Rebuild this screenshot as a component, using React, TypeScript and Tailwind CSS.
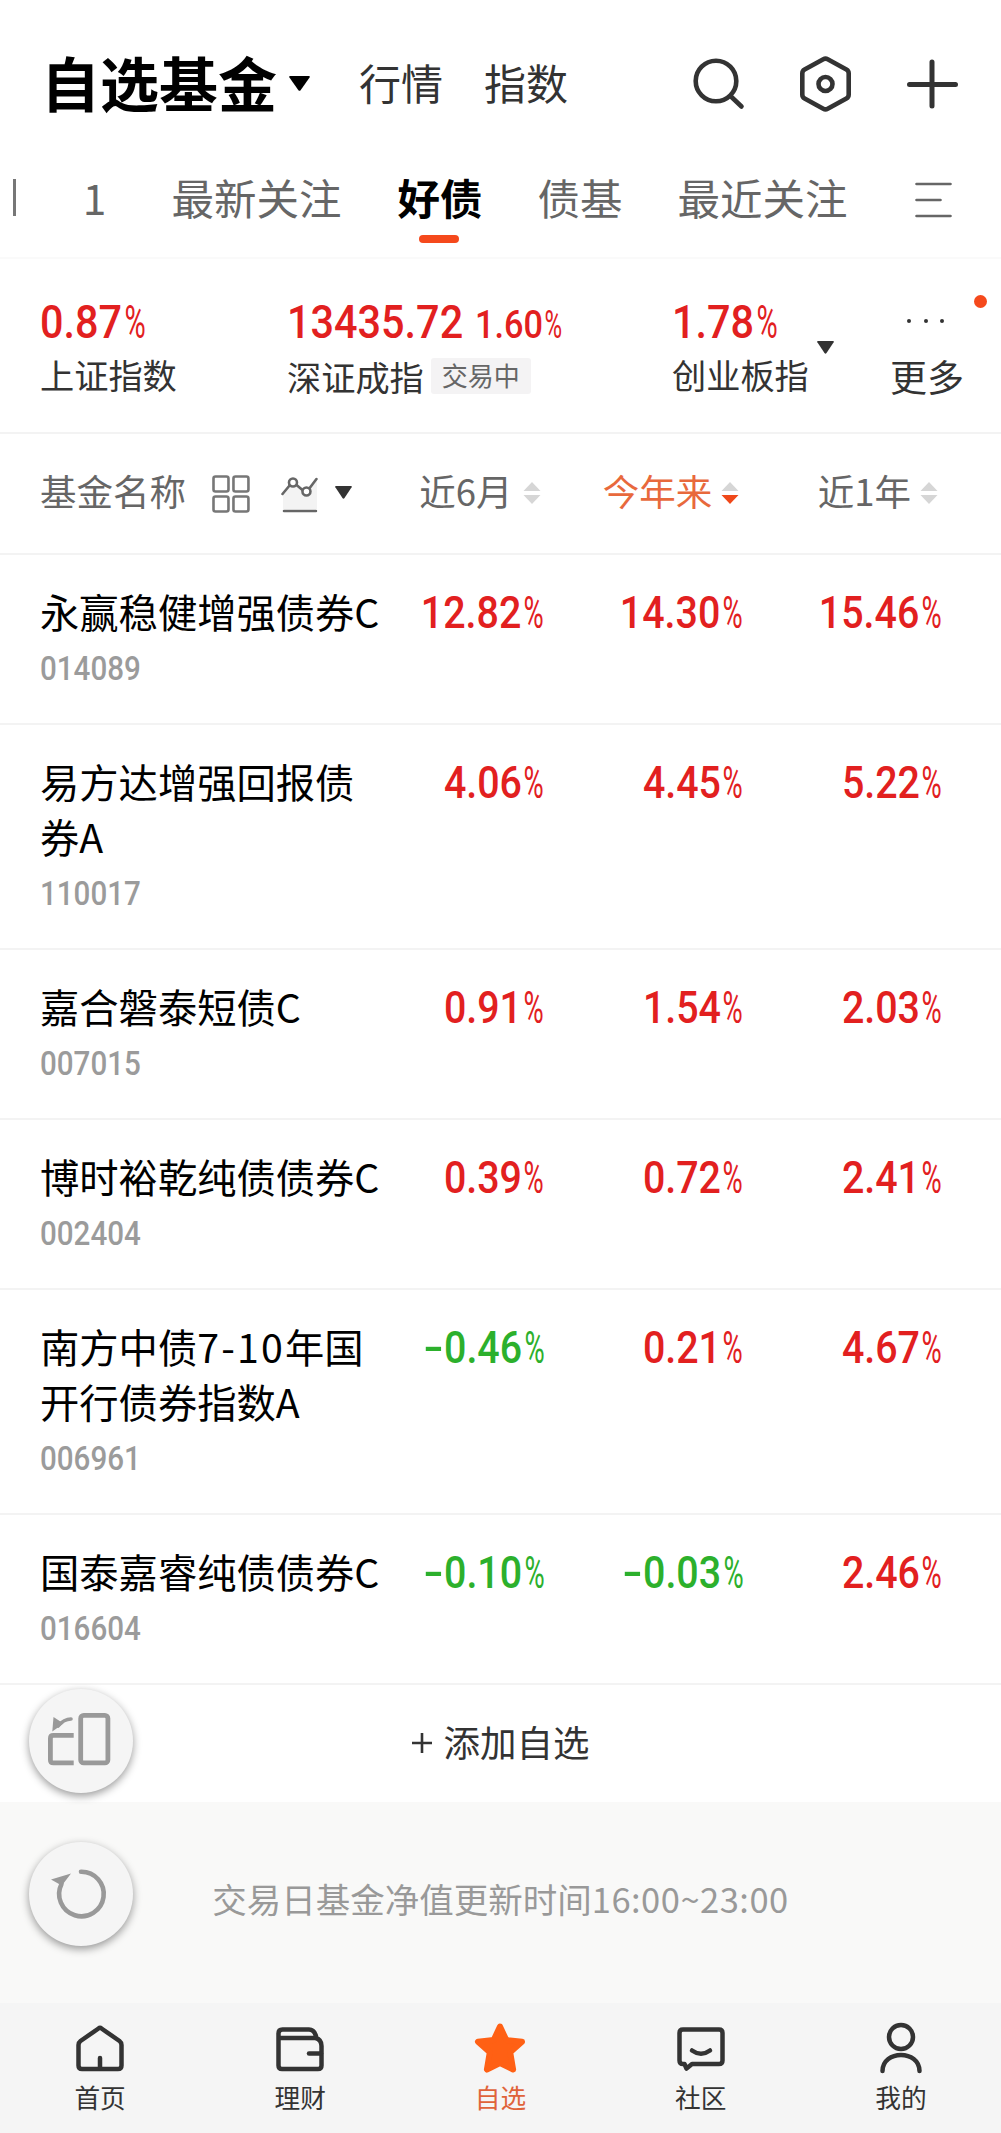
import React from "react";

interface Fund {
  name: string[];
  code: string;
  values: [string, string, string];
}

const funds: Fund[] = [
  { name: ["永赢稳健增强债券C"], code: "014089", values: ["12.82", "14.30", "15.46"] },
  { name: ["易方达增强回报债", "券A"], code: "110017", values: ["4.06", "4.45", "5.22"] },
  { name: ["嘉合磐泰短债C"], code: "007015", values: ["0.91", "1.54", "2.03"] },
  { name: ["博时裕乾纯债债券C"], code: "002404", values: ["0.39", "0.72", "2.41"] },
  { name: ["南方中债7-10年国", "开行债券指数A"], code: "006961", values: ["-0.46", "0.21", "4.67"] },
  { name: ["国泰嘉睿纯债债券C"], code: "016604", values: ["-0.10", "-0.03", "2.46"] },
];

/** Condensed figures; the percent sign is narrower and lighter than the digits. */
function Figure({ value, percent = true, className = "" }: { value: string; percent?: boolean; className?: string }) {
  const negative = value.startsWith("-");
  return (
    <span className={`inline-flex whitespace-nowrap font-['Roboto'] font-medium ${className}`}>
      {negative && <span className="mr-[0.12em] inline-block w-[0.4em] origin-left -translate-y-[0.02em] scale-x-[1.5]">-</span>}
      <span>{negative ? value.slice(1) : value}</span>
      {percent && <span className="ml-[0.05em] inline-block w-[0.49em] origin-left scale-x-[0.7] font-normal">%</span>}
    </span>
  );
}

function Caret({ className }: { className: string }) {
  return (
    <svg viewBox="0 0 20 14" preserveAspectRatio="none" className={className} fill="currentColor">
      <path d="M1.2 0h17.6q1.6 0 .8 1.4L11.2 13q-1.2 1.6-2.4 0L.4 1.4Q-.4 0 1.2 0z" />
    </svg>
  );
}

function SortArrows({ active = false }: { active?: boolean }) {
  return (
    <svg viewBox="0 0 18 22" className="mt-[3px] h-[22px] w-[18px] shrink-0">
      <path d="M9 0l8.5 9H.5z" fill="#d6d6d6" />
      <path d="M9 22l8.5-9H.5z" fill={active ? "#f0481a" : "#d6d6d6"} />
    </svg>
  );
}

function Header() {
  return (
    <header className="flex h-[148px] items-center pt-5 text-[#333]">
      <h1 className="mb-[5px] ml-[41px] w-[236px] whitespace-nowrap text-[59px] font-bold leading-[64px] text-black">自选基金</h1>
      <Caret className="mb-[2px] ml-3 h-[15px] w-[21px] text-black" />
      <span className="mb-[5px] ml-[49px] text-[42px] leading-[48px]">行情</span>
      <span className="mb-[5px] ml-[41px] text-[42px] leading-[48px]">指数</span>
      <div className="ml-auto mr-[42px] flex items-center gap-[53px]">
        <svg viewBox="0 0 54 56" className="h-14 w-[54px]" fill="none" stroke="currentColor" strokeWidth="4.6" strokeLinecap="round">
          <circle cx="25" cy="25" r="20.3" />
          <path d="M40 40.500L50.500 50.500" />
        </svg>
        <svg viewBox="0 0 54 56" className="h-14 w-[54px]" fill="none" stroke="currentColor" strokeWidth="4.6" strokeLinejoin="round">
          <path d="M25.300 3.2q2.2-1.2 4.4 0L48.400 13.600q2.300 1.300 2.300 4v20.800q0 2.700-2.300 4L29.700 52.800q-2.200 1.200-4.400 0L6.600 42.400q-2.300-1.300-2.300-4V17.600q0-2.700 2.300-4z" />
          <circle cx="27.500" cy="28" r="7" />
        </svg>
        <svg viewBox="0 0 54 56" className="h-14 w-[54px]" fill="none" stroke="currentColor" strokeWidth="5" strokeLinecap="round">
          <path d="M27 6v44M4.500 28.500h46" />
        </svg>
      </div>
    </header>
  );
}

function Tabs() {
  return (
    <nav className="flex h-[111px] items-center whitespace-nowrap border-b-2 border-[#fafafa] pb-3 text-[42.500px] leading-[50px] text-[#666]">
      <span className="ml-[13px] mt-[2px] h-[37px] w-[2.500px] bg-[#777]" />
      <span className="ml-[67px] w-[24px] text-center">1</span>
      <span className="ml-[65px]">最新关注</span>
      <span className="relative ml-[56px] font-bold text-black">
        好债
        <span className="absolute left-[21px] top-[63px] h-2 w-10 rounded-full bg-[#f5491c]" />
      </span>
      <span className="ml-[55px]">债基</span>
      <span className="ml-[55px]">最近关注</span>
      <svg viewBox="0 0 37 36" className="ml-auto mr-[49px] mt-[6px] h-9 w-[37px]" stroke="currentColor" strokeWidth="2.600" strokeLinecap="round">
        <path d="M1.500 2h34M1.500 18h24M1.500 34h34" />
      </svg>
    </nav>
  );
}

function Indices() {
  const big = "origin-left scale-x-[0.89] text-[46.500px] leading-[54px] text-[#e2201f]";
  return (
    <section className="flex h-[175px] border-b-2 border-[#f3f3f3] pt-[36px] text-[34.200px] text-[#333]">
      <div className="ml-10 w-[247px]">
        <Figure value="0.87" className={big} />
        <div className="mt-[3px] leading-[44px]">上证指数</div>
      </div>
      <div className="w-[385px] whitespace-nowrap">
        <div className="flex items-baseline">
          <div className="w-[188px]">
            <Figure value="13435.72" percent={false} className={big} />
          </div>
          <Figure value="1.60" className="origin-left scale-x-[0.880] text-[39px] leading-[54px] text-[#e2201f]" />
        </div>
        <div className="mt-[2px] flex items-center leading-[44px]">
          深证成指
          <span className="ml-[7px] h-9 w-[100px] rounded-[3px] bg-[#f4f3f4] text-center text-[26px] leading-[34px] text-[#666]">交易中</span>
        </div>
      </div>
      <div className="w-[138px]">
        <Figure value="1.78" className={big} />
        <div className="mt-[3px] leading-[44px]">创业板指</div>
      </div>
      <Caret className="ml-[7px] mt-[46px] h-[13px] w-[17px]" />
      <div className="relative ml-[56px] w-[76px] text-[37px]">
        <div className="flex h-[54px] items-center gap-[12.500px] pb-[2px] pl-[17px]">
          <i className="size-[4px] rounded-full bg-[#333]" />
          <i className="size-[4px] rounded-full bg-[#333]" />
          <i className="size-[4px] rounded-full bg-[#333]" />
        </div>
        <div className="mt-[5px] leading-[44px]">更多</div>
        <span className="absolute left-[84px] top-0 size-[13px] rounded-full bg-[#f5491c]" />
      </div>
    </section>
  );
}

function ColumnHead() {
  return (
    <div className="flex h-[121px] items-center whitespace-nowrap border-b-2 border-[#f3f3f3] text-[36.500px] leading-[44px] text-[#666]">
      <span className="mb-[5px] ml-10 w-[146px]">基金名称</span>
      <svg viewBox="0 0 38 38" className="ml-[26px] size-[38px]" fill="none" stroke="#777" strokeWidth="2.600">
        <rect x="1.500" y="1.500" width="15" height="15" rx="2" />
        <rect x="21.500" y="1.500" width="15" height="15" rx="2" />
        <rect x="1.500" y="21.500" width="15" height="15" rx="2" />
        <rect x="21.500" y="21.500" width="15" height="15" rx="2" />
      </svg>
      <svg viewBox="0 0 38 38" className="ml-[31px] size-[38px]" fill="none" stroke="#666" strokeWidth="2.600" strokeLinecap="round">
        <path d="M2 19L11 8l14 9 11-13v30H2z" fill="#f3f3f3" stroke="none" />
        <path d="M1.500 19L9 10M15 9.500l6.500 5.500M28 14L35.500 4M3 36h32" />
        <circle cx="12" cy="7.500" r="4" fill="#fff" />
        <circle cx="25.500" cy="16.500" r="4" fill="#fff" />
      </svg>
      <Caret className="mb-[2px] ml-4 h-[13px] w-[17px] text-[#333]" />
      <span className="mb-[5px] ml-auto flex w-[189px] items-center justify-end gap-[10px]">近6月<SortArrows /></span>
      <span className="mb-[5px] flex w-[199px] items-center justify-end gap-[9px] text-[#e8693c]">今年来<SortArrows active /></span>
      <span className="mb-[5px] mr-[63px] flex w-[199px] items-center justify-end gap-[9px]">近1年<SortArrows /></span>
    </div>
  );
}

/** Fund name line; figures inside the name are set a little looser than the characters. */
function NameLine({ text }: { text: string }) {
  return (
    <div className="text-[39.300px] leading-[55px] text-black">
      {text.split(/([0-9-]+)/).map((part, i) =>
        i % 2 === 1 ? <span key={i} className="tracking-[2.200px]">{part}</span> : part,
      )}
    </div>
  );
}

function FundRow({ fund }: { fund: Fund }) {
  return (
    <div className="flex border-b-2 border-[#f3f3f3] pb-[28px] pt-[28px]">
      <div className="ml-10 w-[304px] whitespace-nowrap">
        {fund.name.map((line) => (
          <NameLine key={line} text={line} />
        ))}
        <Figure value={fund.code} percent={false} className="mt-[3px] origin-left scale-x-[0.87] text-[34px] leading-[54px] text-[#9b9b9b]" />
      </div>
      {fund.values.map((v, i) => (
        <div key={i} className="flex w-[199px] justify-end pt-[3px]">
          <Figure
            value={v}
            className={`h-[55px] origin-right scale-x-[0.885] text-[44.500px] leading-[55px] ${v.startsWith("-") ? "text-[#2cb02c]" : "text-[#e2201f]"}`}
          />
        </div>
      ))}
    </div>
  );
}

function FloatingButton({ className, children }: { className: string; children: React.ReactNode }) {
  return (
    <button className={`absolute left-[29px] flex size-[104px] items-center justify-center rounded-full bg-[#f5f5f5] shadow-[0_3px_8px_rgba(0,0,0,0.4)] ${className}`}>
      {children}
    </button>
  );
}

const navIcons: Record<string, React.ReactNode> = {
  首页: (
    <>
      <path d="M24.500 6.500q1.500-1.300 3 0L45.500 19q2 1.500 2 4v20.500q0 3.500-3.500 3.500h-36Q4.500 47 4.500 43.500V23q0-2.500 2-4z" />
      <path d="M26 36v10" />
    </>
  ),
  理财: (
    <>
      <path d="M4.500 16h37q6 1.500 6 8V43.500q0 3.500-3.500 3.500H8q-3.500 0-3.500-3.500V11.500Q4.500 7.500 8.500 7.500H35q6 0 7.500 9" />
      <path d="M35 31.500h12" />
    </>
  ),
  自选: (
    <path
      d="M26 4.500l6.300 13.500 15.700 1.800-11.800 10.400 2.900 17.300L26 41l-13.100 6.500 2.900-17.300L4 19.800 19.700 18z"
      fill="#ff6014"
      stroke="#ff6014"
      strokeWidth="6"
    />
  ),
  社区: (
    <>
      <path d="M8 7.500h36q3.500 0 3.500 3.500v27.500q0 3.500-3.500 3.500H17L11.500 46.500 9.500 42H8Q4.500 42 4.500 38.500V11Q4.500 7.500 8 7.500z" />
      <path d="M17 28.500q9 6.500 18 0" />
    </>
  ),
  我的: (
    <>
      <circle cx="26" cy="15" r="12" />
      <path d="M7.500 49C7.500 27.500 44.500 27.500 44.500 49" />
    </>
  ),
};

function BottomNav() {
  return (
    <nav className="grid h-[130px] grid-cols-5 bg-[#f5f5f5] pt-[19px]">
      {Object.entries(navIcons).map(([label, icon]) => (
        <div key={label} className={`flex flex-col items-center ${label === "自选" ? "text-[#e0633a]" : "text-[#333]"}`}>
          <svg viewBox="0 0 52 52" className="size-[52px]" fill="none" stroke="currentColor" strokeWidth="4.500" strokeLinecap="round" strokeLinejoin="round">
            {icon}
          </svg>
          <span className="mt-[5px] text-[25.700px] leading-9">{label}</span>
        </div>
      ))}
    </nav>
  );
}

export default function App() {
  return (
    <div className="relative h-[2133px] w-[1001px] overflow-hidden bg-white font-['Noto_Sans_CJK_SC',sans-serif]">
      <Header />
      <Tabs />
      <Indices />
      <ColumnHead />
      {funds.map((fund) => (
        <FundRow key={fund.code} fund={fund} />
      ))}
      <div className="flex h-[117px] items-center justify-center gap-3 pb-[2px] text-[36.500px] text-[#333]">
        <svg viewBox="0 0 20 20" className="size-5" stroke="currentColor" strokeWidth="2.600"><path d="M0 10h20M10 0v20" /></svg>
        添加自选
      </div>
      <div className="flex h-[201px] items-center justify-center bg-[#f9f9f8] pb-2 text-[34.500px] text-[#999]">
        <p>
          交易日基金净值更新时间<span className="tracking-[0.500px]">16:00~23:00</span>
        </p>
      </div>
      <BottomNav />
      <FloatingButton className="top-[1689px]">
        <svg viewBox="0 0 66 56" className="h-14 w-[66px]" fill="none" stroke="#999" strokeWidth="4.800" strokeLinejoin="round">
          <path d="M25.700 22.400H5.400q-3 0-3 3v21.500q0 3 3 3h20.300" />
          <rect x="32.700" y="2.400" width="27.200" height="47.500" rx="3" />
          <path d="M10 13q6-7 13-7" strokeWidth="3.600" strokeLinecap="round" />
          <path d="M5.500 4L15.500 10.500 4.300 18.500z" fill="#999" stroke="none" />
        </svg>
      </FloatingButton>
      <FloatingButton className="top-[1842px]">
        <svg viewBox="0 0 60 56" className="h-14 w-[60px]" fill="none" stroke="#999" strokeWidth="4.600" strokeLinecap="round">
          <path d="M30 5.700A22.300 22.300 0 1 1 10.500 18" />
          <path d="M0 13.500L20 7.500 9 22 8 18z" fill="#999" stroke="none" />
        </svg>
      </FloatingButton>
    </div>
  );
}
